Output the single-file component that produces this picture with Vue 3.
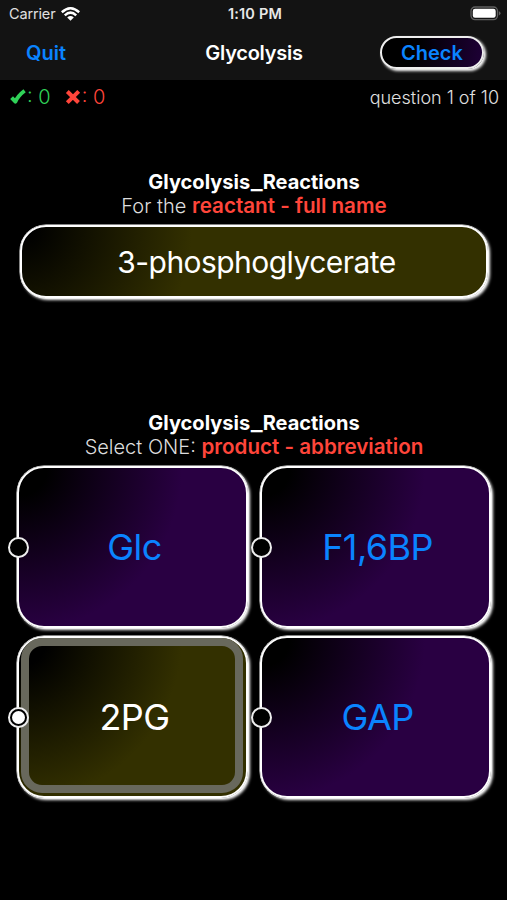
<script setup>
import { ref } from 'vue'

const choices = ['Glc', 'F1,6BP', '2PG', 'GAP']
const selected = ref('2PG')
</script>

<template>
  <main class="screen">
    <header class="top">
      <div class="status">
        <div class="carrier">
          <span class="carrier-name">Carrier</span>
          <svg class="wifi" viewBox="0 0 19 14" width="19" height="14">
            <path d="M.8 5.200Q9.500-2.600 18.200 5.200M3.800 8.300Q9.500 3 15.200 8.300" fill="none" stroke="#fff" stroke-width="2.5" />
            <path d="M6.200 10.400Q9.500 7.500 12.800 10.400L9.500 13.800Z" fill="#fff" />
          </svg>
        </div>
        <span class="time">1:10 PM</span>
        <div class="power">
          <svg viewBox="0 0 31 15" width="31" height="15">
            <rect x="1" y="1" width="26.5" height="12.6" rx="4" fill="none" stroke="#606060" stroke-width="1.3" />
            <rect x="2.800" y="2.800" width="22.9" height="9" rx="2.2" fill="#fff" />
            <path d="M28.900 5.200Q30.500 5.700 30.500 7.300T28.900 9.400Z" fill="#606060" />
          </svg>
        </div>
      </div>
      <nav class="nav">
        <span class="quit">Quit</span>
        <h1 class="title">Glycolysis</h1>
        <button class="check"><span>Check</span></button>
      </nav>
    </header>

    <div class="score">
      <svg class="mark" viewBox="0 0 16 16" width="16" height="16">
        <path d="M1.600 8.600 5.400 12.600Q8.300 6.500 14.600 1.800" fill="none" stroke="#30d158" stroke-width="3.900" stroke-linejoin="round" />
      </svg>
      <span class="right">: 0</span>
      <svg class="mark cross" viewBox="0 0 16 16" width="16" height="16">
        <path d="M2.300 2.500 13.500 13.500M13.700 2.300 2.300 13.700" stroke="#ff453a" stroke-width="4" />
      </svg>
      <span class="wrong">: 0</span>
      <span class="progress">question 1 of 10</span>
    </div>

    <section class="prompt">
      <h2>Glycolysis<span class="bar">_</span>Reactions</h2>
      <p><span>For the </span><b>reactant - full name</b></p>
      <div class="question"><span>3-phosphoglycerate</span></div>
    </section>

    <section class="answers">
      <h2>Glycolysis<span class="bar">_</span>Reactions</h2>
      <p><span>Select ONE: </span><b>product - abbreviation</b></p>
      <div class="grid">
        <button
          v-for="choice in choices"
          :key="choice"
          class="choice"
          :class="{ picked: choice === selected }"
          @click="selected = choice"
        >
          <span class="label">{{ choice }}</span>
          <i class="radio"></i>
        </button>
      </div>
    </section>
  </main>
</template>

<style>
body {
  margin: 0;
  background: #000;
}
</style>

<style scoped>
.screen {
  width: 507px;
  height: 900px;
  overflow: hidden;
  background: #000;
  color: #fff;
  font-family: Inter, "Liberation Sans", sans-serif;
}
span,
h1,
h2,
p {
  white-space: nowrap;
}
button {
  font: inherit;
  padding: 0;
}
.top {
  height: 80px;
  background: #131313;
}
.status {
  height: 27px;
  padding: 0 6px 0 9px;
  display: grid;
  grid-template-columns: 1fr auto 1fr;
  align-items: center;
  font-size: 14.5px;
}
.carrier {
  display: flex;
  align-items: center;
  gap: 6px;
  color: #e0e0e0;
}
.carrier-name {
  letter-spacing: -0.15px;
}
.time {
  font-size: 14.5px;
  letter-spacing: 0.2px;
  font-weight: 600;
  color: #e8e8e8;
}
.power {
  display: flex;
  justify-content: flex-end;
}
.nav {
  height: 51px;
  padding: 0 23px 0 26px;
  display: grid;
  grid-template-columns: 1fr auto 1fr;
  align-items: center;
  font-size: 20px;
  font-weight: 600;
}
.quit {
  color: #0a84ff;
}
.title {
  margin: 0;
  padding-right: 2px;
  font-size: 20px;
  font-weight: 600;
  letter-spacing: -0.25px;
}
.check {
  justify-self: end;
  box-sizing: border-box;
  width: 104px;
  height: 33px;
  border: 2px solid #eee;
  border-radius: 17px;
  color: #0a84ff;
  background: radial-gradient(circle at 0 0, #000 35%, #1c0033 95%);
  box-shadow: 2px 2px 3px #fff;
}
.score {
  height: 34px;
  padding: 0 8px 0 10px;
  display: flex;
  align-items: center;
  font-size: 20px;
  font-weight: 300;
}
.right,
.wrong {
  padding-left: 1px;
}
.right {
  color: #30d158;
}
.cross {
  margin-left: 14px;
}
.wrong {
  color: #ff453a;
}
.progress {
  margin-left: auto;
  font-size: 18px;
  color: #e0e0e0;
}
h2,
p {
  margin: 0;
  height: 25px;
  text-align: center;
  font-size: 20px;
  line-height: 25px;
}
h2 {
  font-weight: 700;
}
.bar {
  display: inline-block;
  transform: scaleX(1.25);
  margin: 0 1.500px;
}
p,
p span {
  white-space: pre;
}
p {
  margin-top: -1px;
  font-weight: 300;
  color: #ddd;
}
p b {
  font-weight: 600;
  font-size: 20.600px;
  line-height: 20px;
  color: #ff453a;
}
.prompt {
  padding: 56px 19px 0 20px;
}
.question {
  box-sizing: border-box;
  height: 73px;
  margin-top: 6px;
  display: flex;
  align-items: center;
  justify-content: center;
  padding-left: 5px;
  border: 2px solid #fff;
  border-radius: 26px;
  background: radial-gradient(circle at 0 0, #000 10px, #333000 170px);
  box-shadow: 0 0 0 0.500px #fff, 2px 2px 3px #fff;
  font-size: 30px;
  letter-spacing: -0.550px;
}
.answers {
  padding: 113px 16px 0 17px;
}
.grid {
  margin-top: 6px;
  display: grid;
  grid-template-columns: 1fr 1fr;
  grid-auto-rows: 162px;
  gap: 8px 12px;
}
.choice {
  position: relative;
  border: 2px solid #fff;
  border-radius: 27px;
  background: radial-gradient(circle at 0 0, #000 28px, #290042 163px);
  box-shadow: 0 0 0 0.500px #fff, 2px 2px 3px #fff;
  color: #0a84ff;
  font-size: 36px;
  letter-spacing: -0.600px;
  padding-left: 4px;
}
.picked {
  color: #fff;
  background: radial-gradient(circle at 0 0, #000 28px, #333000 163px);
}
.picked::before {
  content: "";
  position: absolute;
  inset: 0 3px 3px 2px;
  border: 8px solid #68685c;
  border-radius: 21px;
}
.radio {
  position: absolute;
  box-sizing: border-box;
  left: -11px;
  top: 50%;
  width: 21px;
  height: 21px;
  margin-top: -10.500px;
  border: 2px solid #eee;
  border-radius: 50%;
  background: #000;
}
.picked .radio::after {
  content: "";
  position: absolute;
  inset: 2px;
  border-radius: 50%;
  background: #fff;
}
</style>
